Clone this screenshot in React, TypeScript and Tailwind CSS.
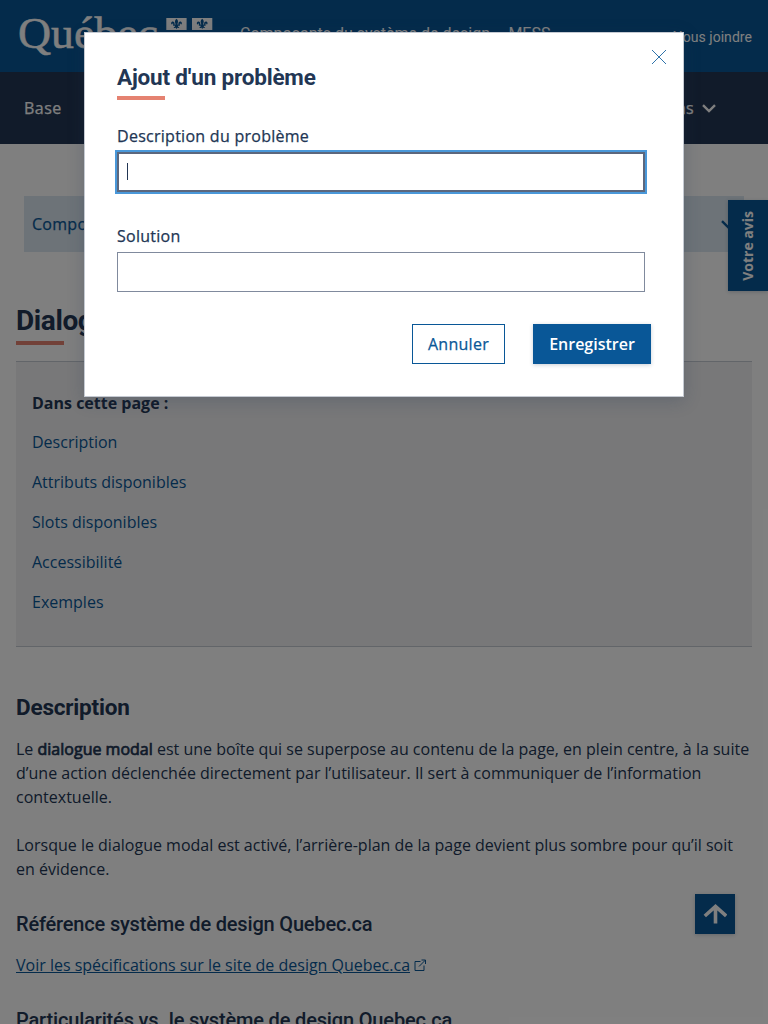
import React from "react";

const roboto = "font-[Roboto,'Liberation_Sans',sans-serif]";
const medium = "tracking-[0.27px] [-webkit-text-stroke:0.25px_currentColor]";

const tocLinks = [
  "Description",
  "Attributs disponibles",
  "Slots disponibles",
  "Accessibilité",
  "Exemples",
];

function FleurPanel({ x }: { x: number }) {
  return (
    <g transform={`translate(${x} 18)`}>
      <rect width="20.3" height="12" fill="#fff" />
      <path
        d="M10.2 0.8 C8.2 2.6 8.4 4 9.4 6.6 H8.2 C8.8 4.2 7 3 5.6 3.7 C4.4 4.3 4.6 6.3 5.8 6.6 C5.8 5.4 6.6 5.2 6.9 5.8 C7.1 6.2 7 6.4 6.8 6.6 V7.8 H8.8 C8.6 8.8 8 9.4 7.2 9.4 C8 10.2 8.9 10 9.4 9.4 L10.2 11.3 L11 9.4 C11.5 10 12.4 10.2 13.2 9.4 C12.4 9.4 11.8 8.8 11.6 7.8 H13.6 V6.6 C13.4 6.4 13.3 6.2 13.5 5.8 C13.8 5.2 14.6 5.4 14.6 6.6 C15.8 6.3 16 4.3 14.8 3.7 C13.4 3 11.6 4.2 12.2 6.6 H11 C12 4 12.2 2.6 10.2 0.8Z"
        fill="#095797"
      />
    </g>
  );
}

function Logo() {
  return (
    <svg width="216" height="72" viewBox="0 0 216 72" className="block shrink-0">
      <text
        x="18"
        y="48"
        fontSize="45"
        textLength="140"
        lengthAdjust="spacingAndGlyphs"
        fill="#fff"
        stroke="#fff"
        strokeWidth="0.5"
        className="font-['Liberation_Serif',serif]"
      >
        Québec
      </text>
      <FleurPanel x={166.3} />
      <FleurPanel x={192} />
    </svg>
  );
}

function Chevron({ className }: { className: string }) {
  return (
    <svg width="14" height="9" viewBox="0 0 14 9" fill="none" className={className}>
      <path d="M1 1.2 L7 7 L13 1.2" stroke="currentColor" strokeWidth="2.4" />
    </svg>
  );
}

function Page() {
  return (
    <div className="h-full overflow-hidden bg-white">
      <header className="flex h-[72px] items-start justify-between bg-[#095797] pr-4 text-white">
        <div className="flex">
          <Logo />
          <span
            className={`${roboto} ml-6 mt-[22px] flex gap-[10px] whitespace-nowrap text-[16px] leading-6`}
          >
            <span>Composants du système de design</span>
            <span>- MESS</span>
          </span>
        </div>
        <span className={`${roboto} mt-[27px] text-[14px] leading-5 tracking-[0.05px]`}>
          Nous joindre
        </span>
      </header>
      <nav
        className={`${medium} flex h-[72px] items-center justify-between bg-[#223654] pl-6 pr-[52px] text-[16px] text-white`}
      >
        <span className="tracking-[0.5px]">Base</span>
        <span className="flex items-center gap-[8px]">
          Patrons
          <Chevron className="block" />
        </span>
      </nav>

      <main className="px-4 pt-[52px] text-[16px] leading-6 text-[#223654]">
        <div
          className={`${medium} mx-2 flex h-14 items-center justify-between bg-[#dae6f0] pl-2 pr-[9px] text-[#095797]`}
        >
          Composants
          <Chevron className="block" />
        </div>
        <h1
          className={`${roboto} mt-[52px] text-[28px] font-bold leading-[34px] tracking-[-0.4px]`}
        >
          Dialogue modal
        </h1>
        <div className="mt-[3px] h-1 w-12 bg-[#e58271]" />
        <section className="mt-4 h-[286px] border-y border-[#c5cad2] bg-[#f1f1f2] px-4 pt-[29px]">
          <h2 className="font-bold leading-6">Dans cette page :</h2>
          <ul className="mt-[7px]">
            {tocLinks.map((label) => (
              <li key={label} className="flex h-10 items-center text-[#095797]">
                {label}
              </li>
            ))}
          </ul>
        </section>
        <h2 className={`${roboto} mt-[46px] text-[22.5px] font-bold leading-7 tracking-[-0.19px]`}>
          Description
        </h2>
        <p className="mt-4 whitespace-nowrap">
          Le{" "}
          <b className="font-normal tracking-[0.01px] [-webkit-text-stroke:0.7px_currentColor]">
            dialogue modal
          </b>{" "}
          est une boîte qui se superpose au contenu de la page, en plein centre, à la suite
          <br />
          d’une action déclenchée directement par l’utilisateur. Il sert à communiquer de
          l’information
          <br />
          contextuelle.
        </p>
        <p className="mt-6 whitespace-nowrap">
          Lorsque le dialogue modal est activé, l’arrière-plan de la page devient plus sombre pour
          qu’il soit
          <br />
          en évidence.
        </p>
        <h3 className={`${roboto} mt-[31px] text-[20px] font-medium leading-6 tracking-[-0.18px]`}>
          Référence système de design Quebec.ca
        </h3>
        <p className="mt-[17px] flex items-center text-[#095797]">
          <a className="underline">Voir les spécifications sur le site de design Quebec.ca</a>
          <svg
            width="13"
            height="13"
            viewBox="0 0 13 13"
            fill="none"
            stroke="currentColor"
            className="ml-1 block"
          >
            <path d="M6.5 2.5 H1 V11.5 H10 V6.5 M7.5 1 H11.5 V5 M11.3 1.2 L5 7.5" />
          </svg>
        </p>
        <h3 className={`${roboto} mt-[31px] text-[20px] font-medium leading-6 tracking-[-0.16px]`}>
          Particularités vs. le système de design Quebec.ca
        </h3>
      </main>
    </div>
  );
}

function Dialog() {
  return (
    <div
      role="dialog"
      className="absolute left-[84px] top-8 flex h-[365px] w-[600px] flex-col border border-[#c5cad2] bg-white px-8 pt-[30px] text-[16px] leading-6 text-[#223654] shadow-[0_4px_16px_rgba(34,54,84,0.24)]"
    >
      <svg
        width="16"
        height="16"
        viewBox="0 0 16 16"
        fill="none"
        stroke="#2f73aa"
        className="absolute right-4 top-4"
      >
        <path d="M1 1 L15 15 M15 1 L1 15" />
      </svg>
      <h2 className={`${roboto} text-[22.5px] font-bold leading-7 tracking-[-0.19px]`}>
        Ajout d'un problème
      </h2>
      <div className="mt-[5px] h-1 w-12 shrink-0 bg-[#e58271]" />
      <label className={`${medium} mt-6`}>Description du problème</label>
      <div className="mt-1 flex h-10 w-[528px] items-center border-2 border-[#5c677d] bg-white px-2 outline-2 outline-[#4a98d9]">
        <span className="mb-[2px] h-[17px] w-px bg-[#223654]" />
      </div>
      <label className={`${medium} mt-8`}>Solution</label>
      <div className="mt-1 h-10 w-[528px] border border-[#808a9d] bg-white" />
      <div className="mt-8 flex justify-end gap-7">
        <button className={`${medium} h-10 w-[93px] border border-[#095797] text-[#095797]`}>
          Annuler
        </button>
        <button className="h-10 w-[118px] bg-[#095797] font-semibold text-white shadow-[0_1px_4px_rgba(34,54,84,0.24)]">
          Enregistrer
        </button>
      </div>
    </div>
  );
}

export default function App() {
  return (
    <div className="relative h-[1024px] w-[768px] overflow-hidden font-['Open_Sans','Noto_Sans',sans-serif]">
      <Page />
      <div className="absolute right-0 top-[200px] flex h-[91px] w-10 items-center justify-center bg-[#095797] text-white shadow-[0_1px_4px_rgba(34,54,84,0.24)]">
        <span className="rotate-180 text-[14px] font-bold leading-5 [writing-mode:vertical-rl]">
          Votre avis
        </span>
      </div>
      <div className="absolute left-[695px] top-[894px] flex h-10 w-10 items-center justify-center bg-[#095797] shadow-[0_1px_4px_rgba(34,54,84,0.24)]">
        <svg width="24" height="22" viewBox="0 0 24 22" fill="none" stroke="#fff" strokeWidth="3.6">
          <path d="M12.5 20.5 V3 M1.8 13 L12.5 3.4 L23.2 13" />
        </svg>
      </div>
      <div className="absolute inset-0 bg-black/50" />
      <Dialog />
    </div>
  );
}
